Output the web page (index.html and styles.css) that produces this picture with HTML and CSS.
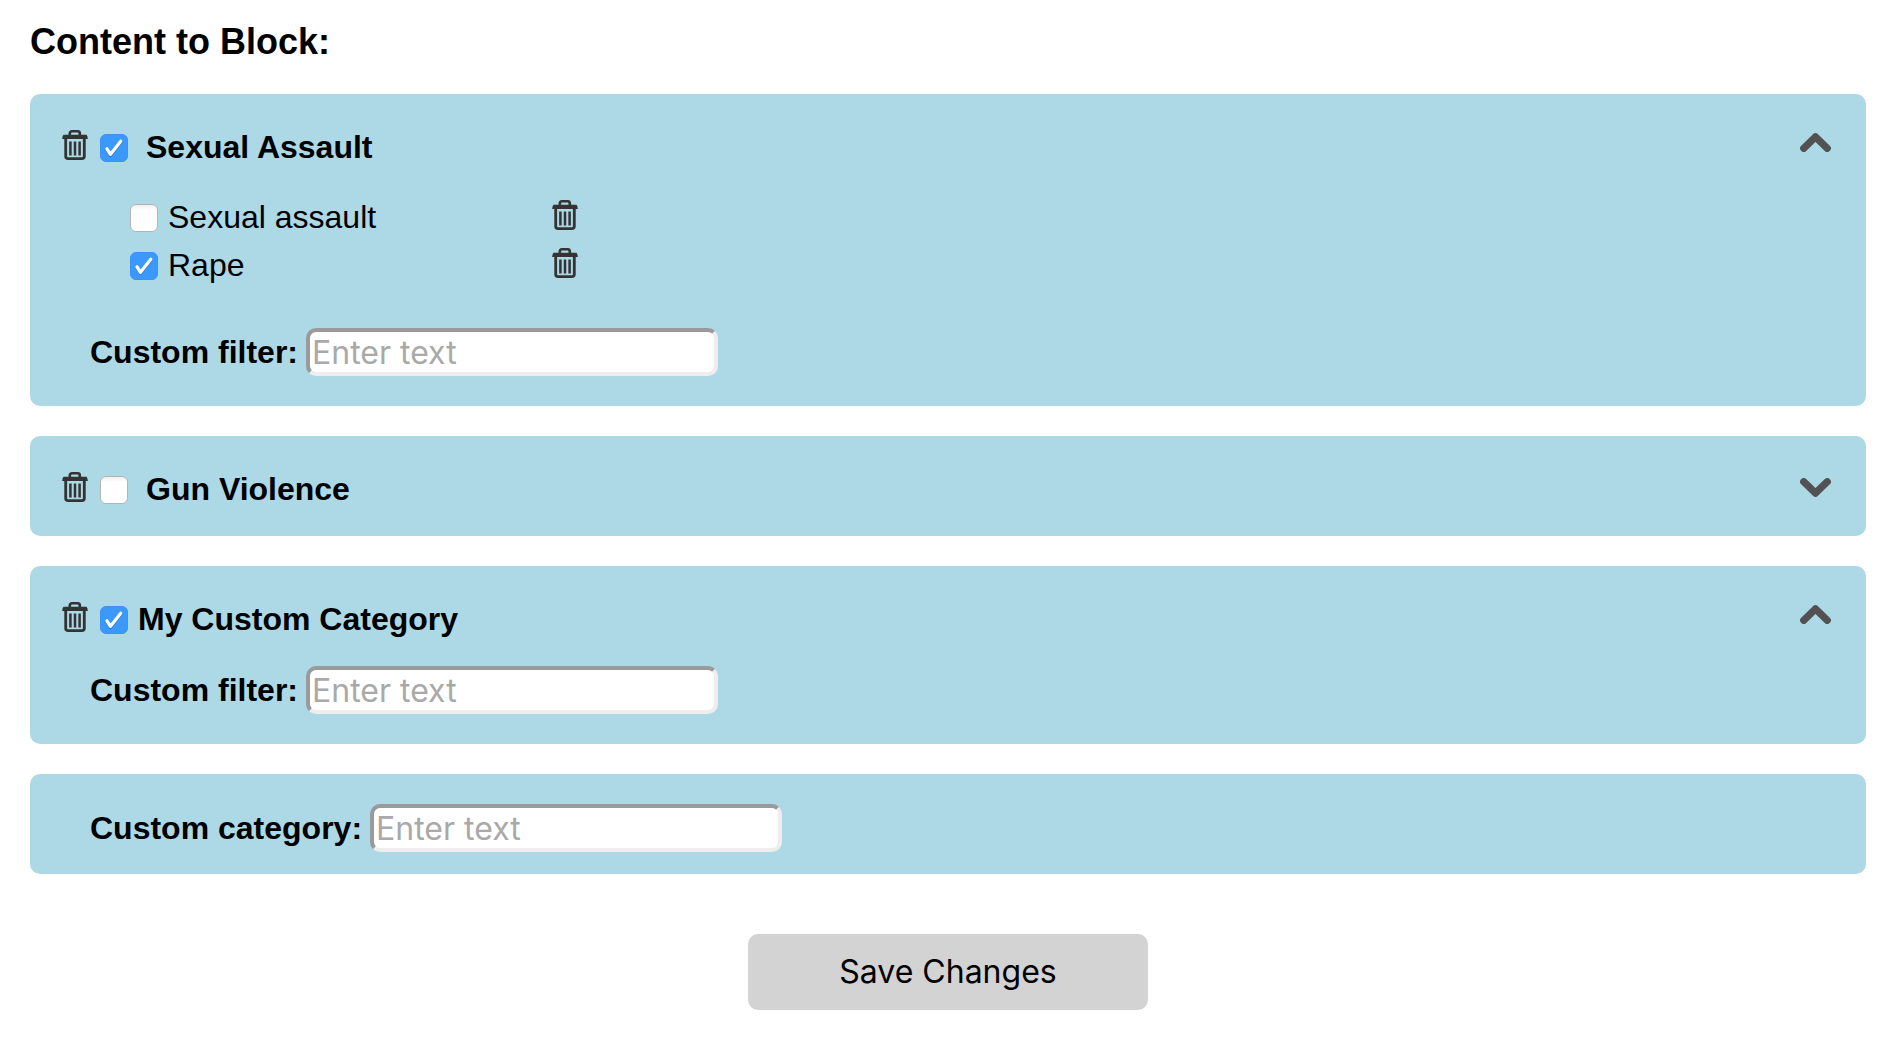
FILE: index.html
```html
<!DOCTYPE html>
<html lang="en">
<head>
<meta charset="utf-8">
<meta name="viewport" content="width=device-width, initial-scale=1">
<title>Content to Block</title>
<link rel="stylesheet" href="styles.css">
</head>
<body>
<svg class="sprite" aria-hidden="true">
  <symbol id="trash" viewBox="0 0 26 30">
    <path d="M7.8 5.5V3.4Q7.8 1.3 10 1.3H15.6Q17.8 1.3 17.8 3.4V5.5" fill="none" stroke="#333" stroke-width="2.6"/>
    <path d="M1.5 4.8H24.5Q25.6 5.6 25.8 9H.2Q.4 5.6 1.5 4.8Z" fill="#333"/>
    <path d="M3.7 8V26.2Q3.7 28.6 6.1 28.6H19.9Q22.3 28.6 22.3 26.2V8" fill="none" stroke="#333" stroke-width="2.8"/>
    <path d="M8.4 11.5V25.6M13 11.5V25.6M17.6 11.5V25.6" fill="none" stroke="#333" stroke-width="2.5"/>
  </symbol>
  <symbol id="chevron-up" viewBox="0 0 31 19">
    <path d="M3.7 15.3L15.5 3.9L27.3 15.3" fill="none" stroke="#525252" stroke-width="7.2" stroke-linecap="round" stroke-linejoin="round"/>
  </symbol>
  <symbol id="chevron-down" viewBox="0 0 31 19">
    <path d="M3.7 3.7L15.5 15.1L27.3 3.7" fill="none" stroke="#525252" stroke-width="7.2" stroke-linecap="round" stroke-linejoin="round"/>
  </symbol>
</svg>
<main>
  <h1 class="title">Content to Block:</h1>
  <form class="filters">
    <section class="panel">
      <div class="panel-header">
        <button type="button" class="trash" aria-label="Delete Sexual Assault"><svg><use href="#trash"/></svg></button>
        <input type="checkbox" class="check" id="cat-assault" checked>
        <label class="category category-preset" for="cat-assault">Sexual Assault</label>
        <button type="button" class="toggle" aria-label="Collapse" aria-expanded="true"><svg><use href="#chevron-up"/></svg></button>
      </div>
      <ul class="terms">
        <li class="term">
          <input type="checkbox" class="check" id="term-1">
          <label class="term-label" for="term-1">Sexual assault</label>
          <button type="button" class="trash" aria-label="Delete Sexual assault"><svg><use href="#trash"/></svg></button>
        </li>
        <li class="term">
          <input type="checkbox" class="check" id="term-2" checked>
          <label class="term-label" for="term-2">Rape</label>
          <button type="button" class="trash" aria-label="Delete Rape"><svg><use href="#trash"/></svg></button>
        </li>
      </ul>
      <div class="field">
        <label for="filter-1">Custom filter:</label>
        <input type="text" class="text-input" id="filter-1" placeholder="Enter text">
      </div>
    </section>

    <section class="panel">
      <div class="panel-header">
        <button type="button" class="trash" aria-label="Delete Gun Violence"><svg><use href="#trash"/></svg></button>
        <input type="checkbox" class="check" id="cat-gun">
        <label class="category category-preset" for="cat-gun">Gun Violence</label>
        <button type="button" class="toggle" aria-label="Expand" aria-expanded="false"><svg><use href="#chevron-down"/></svg></button>
      </div>
    </section>

    <section class="panel">
      <div class="panel-header">
        <button type="button" class="trash" aria-label="Delete My Custom Category"><svg><use href="#trash"/></svg></button>
        <input type="checkbox" class="check" id="cat-custom" checked>
        <label class="category" for="cat-custom">My Custom Category</label>
        <button type="button" class="toggle" aria-label="Collapse" aria-expanded="true"><svg><use href="#chevron-up"/></svg></button>
      </div>
      <div class="field">
        <label for="filter-2">Custom filter:</label>
        <input type="text" class="text-input" id="filter-2" placeholder="Enter text">
      </div>
    </section>

    <section class="panel panel-new">
      <div class="field">
        <label for="new-category">Custom category:</label>
        <input type="text" class="text-input" id="new-category" placeholder="Enter text">
      </div>
    </section>

    <button type="submit" class="save">Save Changes</button>
  </form>
</main>
</body>
</html>
```
FILE: styles.css
```css
* {
  box-sizing: border-box;
}

body {
  margin: 0;
  padding: 21px 32px 30px 30px;
  background: #fff;
  color: #000;
  font: 32px/36px "Liberation Sans", Arial, sans-serif;
}

button {
  padding: 0;
  border: 0;
  background: none;
  cursor: pointer;
}

.sprite {
  display: none;
}

.title {
  margin: 0 0 31px;
  font-size: 36px;
  line-height: 42px;
}

.filters {
  display: flex;
  flex-direction: column;
  gap: 30px;
}

.panel {
  padding: 34px 34px 28px 32px;
  border-radius: 10px;
  background: lightblue;
}

.panel-new {
  padding-top: 30px;
  padding-bottom: 20px;
}

.panel-header {
  display: flex;
  align-items: center;
  height: 38px;
}

.trash {
  width: 26px;
  height: 34px;
}

.trash svg {
  display: block;
  width: 26px;
  height: 30px;
  margin-bottom: 4px;
}

.check {
  flex: none;
  appearance: none;
  width: 28px;
  height: 28px;
  margin: 2px 10px 0 0;
  border: 1px solid #b4b4b4;
  border-radius: 6px;
  background: #fff linear-gradient(#f0f0f0, #fff 5px);
}

.check:checked {
  border-color: #3b93f7;
  background: #3b99fc url("data:image/svg+xml,%3Csvg xmlns='http://www.w3.org/2000/svg' viewBox='0 0 28 28' fill='none' stroke-linecap='round' stroke-linejoin='round' stroke-width='3.2'%3E%3Cpath d='M7 16L10.5 21.5L20.8 8.4' stroke='%232f7fd6'/%3E%3Cpath d='M7 14.8L10.5 20.3L20.8 7.2' stroke='%23fff'/%3E%3C/svg%3E") center / 28px 28px no-repeat;
}

.panel-header .check {
  margin-left: 12px;
}

.category {
  font-weight: bold;
}

.category-preset {
  margin-left: 8px;
}

.toggle {
  align-self: flex-start;
  width: 32px;
  height: 28px;
  margin-left: auto;
}

.toggle svg {
  display: block;
  width: 31px;
  height: 19px;
}

.toggle[aria-expanded="false"] {
  padding-top: 6px;
}

.terms {
  margin: 27px 0 39px 68px;
  padding: 0;
  list-style: none;
}

.term {
  display: flex;
  align-items: center;
  height: 48px;
}

.term-label {
  width: 384px;
}

.field {
  display: flex;
  align-items: center;
  gap: 8px;
  margin: 28px 0 2px 28px;
  font-weight: bold;
}

.terms + .field,
.panel-new .field {
  margin-top: 0;
}

.text-input {
  width: 412px;
  height: 48px;
  padding: 0 2px;
  border: 4px solid;
  border-color: #9a9a9a #eee #eee #9a9a9a;
  border-radius: 10px;
  background: #fff;
  font: 32px/36px Inter, sans-serif;
}

.text-input::placeholder {
  color: #a9a9a9;
  opacity: 1;
}

.save {
  align-self: center;
  width: 400px;
  height: 76px;
  margin-top: 30px;
  border-radius: 10px;
  background: lightgray;
  color: #000;
  font: 32px/36px Inter, sans-serif;
}
```
